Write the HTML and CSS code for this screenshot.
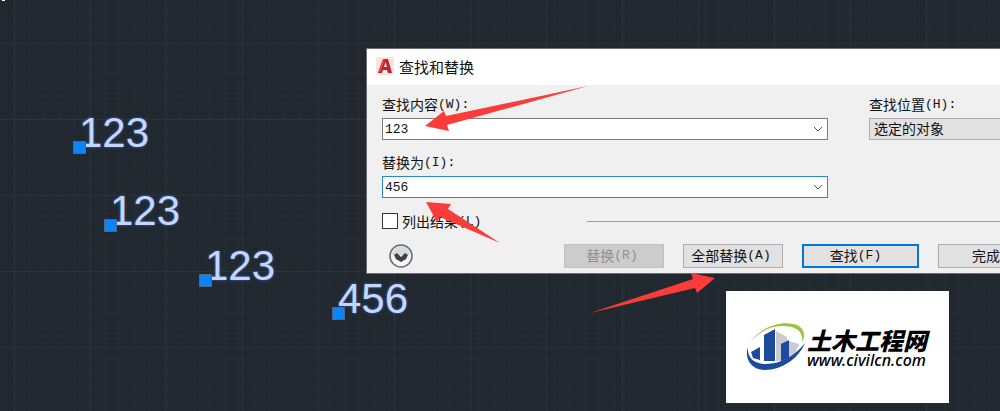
FILE: index.html
```html
<!doctype html>
<html lang="zh-CN">
<head>
    <meta charset="UTF-8">
    <meta name="viewport" content="width=device-width, initial-scale=1.0">
    <title>查找和替换</title>
    <link rel="stylesheet" href="styles.css">
</head>
<body>
<main class="canvas">
    <div class="cursor"></div>
    <div class="node node-1"><span class="grip"></span><span class="node-text">123</span></div>
    <div class="node node-2"><span class="grip"></span><span class="node-text">123</span></div>
    <div class="node node-3"><span class="grip"></span><span class="node-text">123</span></div>
    <div class="node node-4"><span class="grip"></span><span class="node-text">456</span></div>

    <section class="dialog">
        <header class="titlebar">
            <svg class="app-icon" viewBox="0 0 18 18">
                <rect width="18" height="18" fill="#fbe3df"/>
                <path d="M2 16 7 2h5l4 14h-4l-1-3H7l-1 3z" fill="#b9252c"/>
                <path d="M8 10 9.500 5l1.500 5z" fill="#fbe3df"/>
                <path d="M7 2h2L5 14l-3 2z" fill="#dc4a45"/>
            </svg>
            <h1>查找和替换</h1>
        </header>
        <form class="dialog-body" action="#">
            <div class="fields">
                <div class="field">
                    <label for="find">查找内容<span class="key">(W):</span></label>
                    <div class="combo">
                        <input id="find" type="text" value="123">
                        <button type="button" aria-label="查找内容">
                            <svg viewBox="0 0 10 6"><path d="M1 1l4 4 4-4"/></svg>
                        </button>
                    </div>
                </div>
                <div class="field">
                    <label for="place">查找位置<span class="key">(H):</span></label>
                    <select id="place">
                        <option>选定的对象</option>
                    </select>
                </div>
                <div class="field">
                    <label for="replace">替换为<span class="key">(I):</span></label>
                    <div class="combo active">
                        <input id="replace" type="text" value="456">
                        <button type="button" aria-label="替换为">
                            <svg viewBox="0 0 10 6"><path d="M1 1l4 4 4-4"/></svg>
                        </button>
                    </div>
                </div>
            </div>
            <div class="list-row">
                <input id="list" type="checkbox">
                <label for="list">列出结果<span class="key">(L)</span></label>
                <hr>
            </div>
            <div class="actions">
                <button class="expand" type="button" aria-label="更多选项">
                    <svg viewBox="0 0 24 24">
                        <circle cx="12" cy="12" r="11" fill="#f4f5f6" stroke="#666b70" stroke-width="1.500"/>
                        <path d="M3 11a9 9 0 0 1 18 0z" fill="#d5dae1"/>
                        <path d="M5 11 8 9l4 4 4-4 3 2-2 4-5 3-5-3z" fill="#3a4149"/>
                    </svg>
                </button>
                <button class="btn" type="button" disabled>替换<span class="key">(R)</span></button>
                <button class="btn" type="button">全部替换<span class="key">(A)</span></button>
                <button class="btn btn-default" type="button">查找<span class="key">(F)</span></button>
                <button class="btn" type="button">完成</button>
            </div>
        </form>
    </section>

    <svg class="arrows">
        <path d="M425 126 444 111 446 116 588 86 447 125 449 131z"/>
        <path d="M426 202 451 204 448 209 500 243 440 217 437 222z"/>
        <path d="M715 278 691 273 693 279 590 313 695 288 697 293z"/>
    </svg>

    <a class="brand" href="#">
        <svg class="brand-mark" viewBox="0 0 60 50">
            <path d="M30 9 41 15v24H30z" fill="#c9cbd0"/>
            <path d="M43 19 53 22 49 32 43 36z" fill="#c9cbd0"/>
            <path d="M5 30 14 25v13L7 36z" fill="#1c4a9c"/>
            <path d="M18 13 29 7v32H18z" fill="#1c4a9c"/>
            <path d="M35 22 43 18v18l-8 3z" fill="#1c4a9c"/>
            <path d="M4 21C15 3 40-3 53 4c6 4 6 10 3 17C58 9 50 4 36 4 23 4 12 11 4 21z" fill="#9bc53a"/>
            <path d="M2 25C-2 36 5 48 19 48c17 0 34-12 40-27C50 33 35 42 20 42 8 42 1 36 2 25z" fill="#1c4a9c"/>
        </svg>
        <span class="brand-text">
            <strong>土木工程网</strong>
            <span>www.civilcn.com</span>
        </span>
    </a>
</main>
</body>
</html>
```
FILE: styles.css
```css
* {
    box-sizing: border-box;
}

body {
    margin: 0;
    font-family: "Liberation Sans", "Noto Sans CJK SC", sans-serif;
    font-size: 14px;
    color: #111;
}

button, input, select {
    font: inherit;
    color: inherit;
}

.canvas {
    position: relative;
    min-height: 100vh;
    overflow: hidden;
    background-color: #212830;
    background-image:
        linear-gradient(#2b333b 1px, transparent 1px),
        linear-gradient(90deg, #2b333b 1px, transparent 1px),
        linear-gradient(#232b33 1px, transparent 1px),
        linear-gradient(90deg, #232b33 1px, transparent 1px);
    background-size: 76px 76px, 76px 76px, 15px 15px, 15px 15px;
    background-position: 14px 43px;
}

.cursor {
    position: absolute;
    left: 2px;
    top: 0;
    width: 3px;
    height: 1px;
    background: #fff;
}

/* text objects with their grips */
.node {
    position: absolute;
    display: flex;
    align-items: flex-end;
}

.node-1 {
    left: 73px;
    top: 111px;
}

.node-2 {
    left: 104px;
    top: 189px;
}

.node-3 {
    left: 199px;
    top: 244px;
}

.node-4 {
    left: 332px;
    top: 277px;
}

.grip {
    z-index: 1;
    width: 13px;
    height: 13px;
    background: #0a84ff;
    border: 1px solid #4d6787;
}

.node-text {
    margin-left: -7px;
    font-size: 42px;
    line-height: 43px;
    color: #c3d6ff;
    text-shadow: 0 0 3px #3d68b0;
}

/* dialog window */
.dialog {
    position: absolute;
    left: 366px;
    right: -56px;
    top: 48px;
    background: #f0f0f0;
    border: 1px solid #6a6e72;
}

.titlebar {
    display: flex;
    align-items: center;
    gap: 5px;
    height: 36px;
    padding: 0 9px 2px;
    background: #fff;
}

.titlebar h1 {
    margin: 0;
    font-size: 15px;
    font-weight: 400;
}

.app-icon {
    width: 18px;
    height: 18px;
}

.dialog-body {
    padding: 9px 15px 5px;
}

.key {
    font-family: "Liberation Mono", monospace;
    font-size: 13px;
}

.fields {
    display: grid;
    grid-template-columns: 446px 1fr;
    gap: 12px 41px;
}

.field {
    display: flex;
    flex-direction: column;
    gap: 4px;
}

label {
    display: flex;
    align-items: center;
    height: 20px;
}

.combo {
    display: flex;
    height: 22px;
    background: #fff;
    border: 1px solid #7a7a7a;
}

.combo.active {
    border-color: #2a88cc;
}

.combo input {
    flex: 1;
    min-width: 0;
    padding: 0 2px;
    border: 0;
    outline: 0;
    background: none;
    font-family: "Liberation Mono", monospace;
    font-size: 13px;
}

.combo button {
    display: flex;
    align-items: center;
    justify-content: center;
    width: 18px;
    padding: 0;
    border: 0;
    background: none;
}

.combo svg {
    width: 10px;
    height: 6px;
    fill: none;
    stroke: #555;
}

select {
    height: 22px;
    padding: 0 4px;
    appearance: none;
    background: #e1e1e1;
    border: 1px solid #adadad;
    border-radius: 0;
}

.list-row {
    display: flex;
    align-items: center;
    height: 20px;
    margin-top: 13px;
}

.list-row input {
    width: 16px;
    height: 16px;
    margin: 0 4px 0 0;
    appearance: none;
    background: #fff;
    border: 1px solid #333;
}

.list-row hr {
    flex: 1;
    margin: 0 0 0 106px;
    border: 0;
    border-top: 1px solid #a0a0a0;
}

.actions {
    display: flex;
    align-items: center;
    gap: 19px;
    margin-top: 13px;
}

.expand {
    width: 24px;
    height: 24px;
    margin: 0 132px 0 7px;
    padding: 0;
    border: 0;
    background: none;
}

.expand svg {
    display: block;
}

.btn {
    display: flex;
    align-items: center;
    justify-content: center;
    width: 100px;
    height: 24px;
    padding: 0 4px 2px 0;
    background: #e1e1e1;
    border: 1px solid #adadad;
}

.btn:disabled {
    color: #909090;
    background: #ccc;
    border-color: #bfbfbf;
}

.btn-default {
    width: 117px;
    padding-right: 10px;
    border: 2px solid #0078d7;
}

.arrows {
    position: absolute;
    left: 0;
    top: 0;
    width: 100%;
    height: 100%;
    fill: #fb3c38;
    pointer-events: none;
}

/* site badge */
.brand {
    position: absolute;
    left: 726px;
    top: 291px;
    display: flex;
    align-items: center;
    gap: 1px;
    width: 223px;
    height: 112px;
    padding: 0 20px;
    background: #fff;
    color: #000;
    text-decoration: none;
}

.brand-mark {
    flex: none;
    width: 60px;
    height: 50px;
}

.brand-text {
    display: flex;
    flex-direction: column;
    padding-top: 6px;
    font-family: "Noto Sans", "Noto Sans CJK SC", sans-serif;
    font-style: italic;
    white-space: nowrap;
}

.brand-text strong {
    font-size: 24px;
    font-weight: 900;
    line-height: 20px;
}

.brand-text span {
    font-size: 16px;
    font-weight: 500;
    line-height: 18px;
}
```
